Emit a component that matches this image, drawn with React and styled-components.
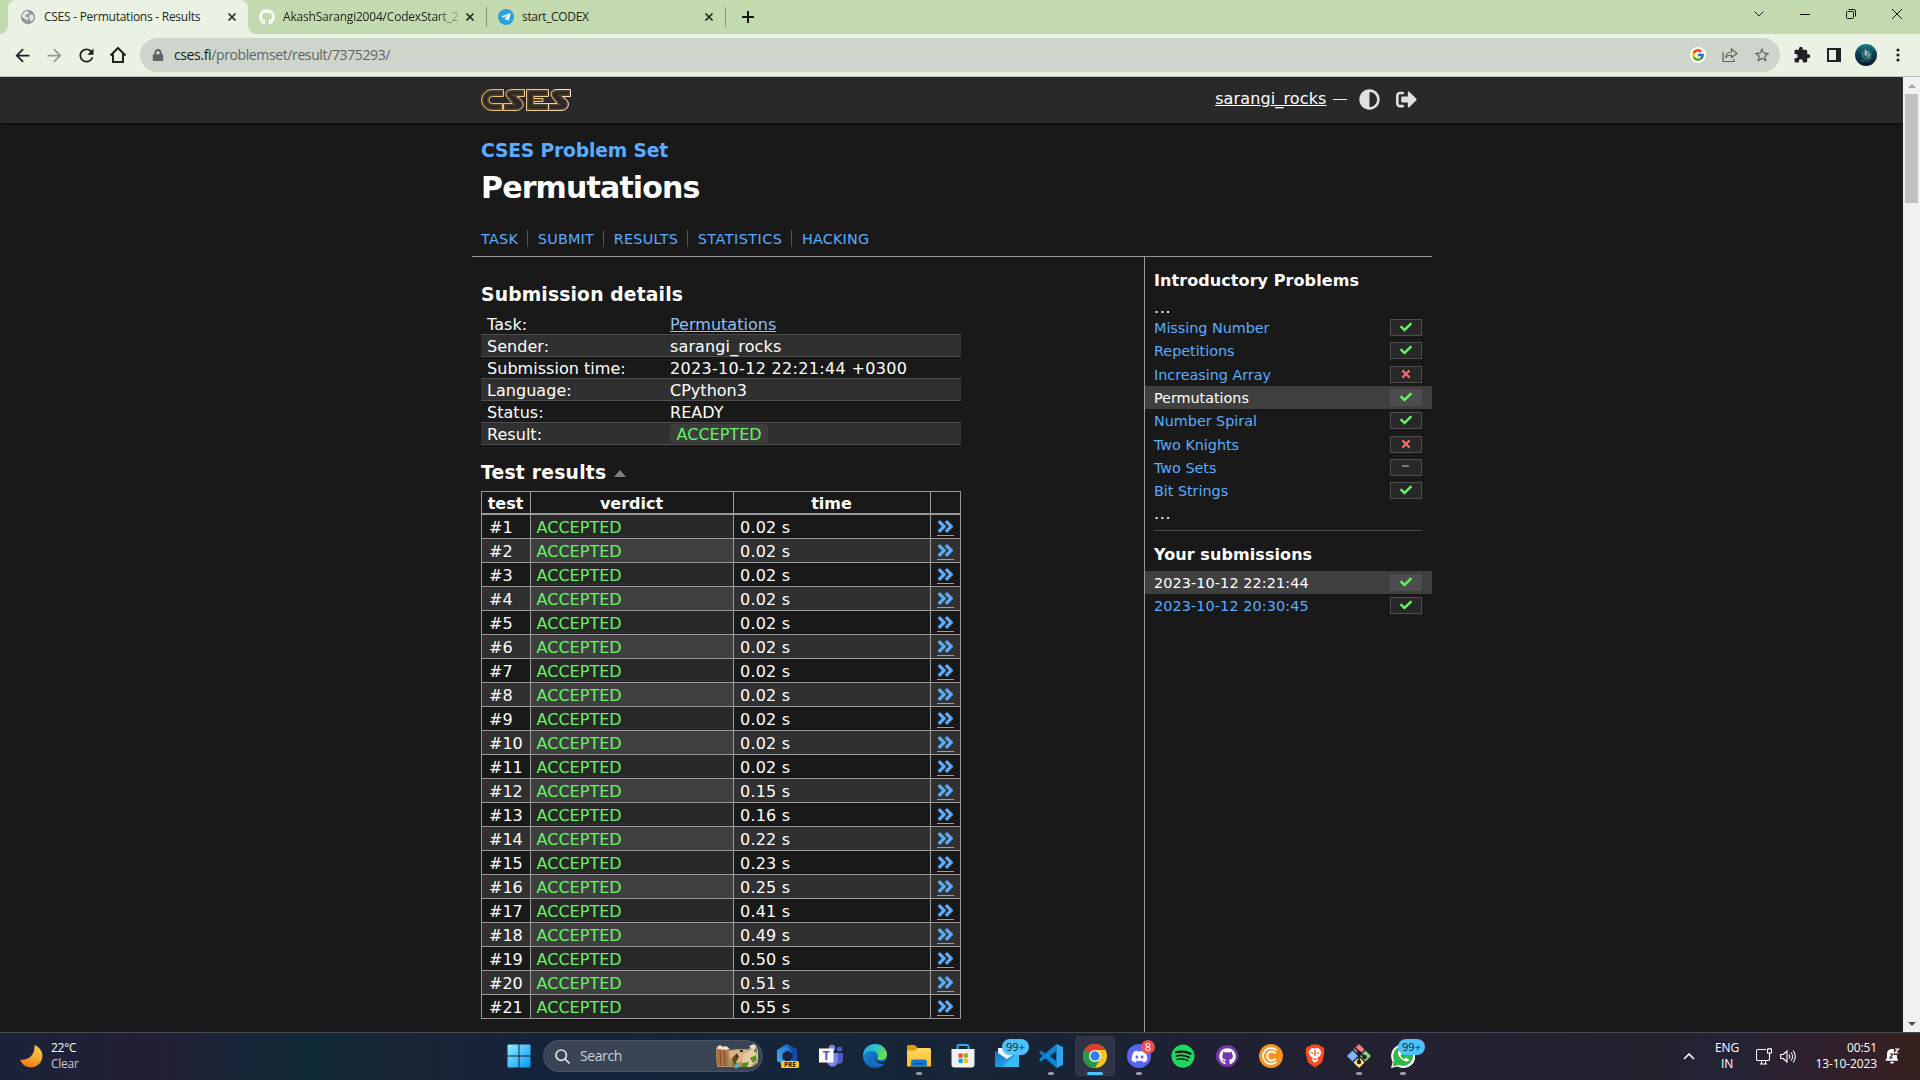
import React from 'react';
import styled, { createGlobalStyle, css } from 'styled-components';
import { FaAdjust, FaSignOutAlt, FaAngleDoubleRight, FaCheck, FaTimes, FaGithub, FaDiscord, FaSpotify, FaTelegramPlane, FaLock } from 'react-icons/fa';
import { FcGoogle } from 'react-icons/fc';
import { MdExtension, MdStarBorder, MdRefresh, MdArrowBack, MdArrowForward } from 'react-icons/md';

const ui = '"Open Sans", "Noto Sans", sans-serif';
const body = '"DejaVu Sans", "Noto Sans", sans-serif';

const Global = createGlobalStyle`
  * { box-sizing: border-box; }
  body { margin: 0; background: #191919; overflow: hidden; }
  svg { display: block; flex: none; }
`;

const Screen = styled.div`
  width: 1920px;
  height: 1080px;
  display: flex;
  flex-direction: column;
  overflow: hidden;
  background: #191919;
`;

/* ---------- browser chrome ---------- */
const TabStrip = styled.div`
  height: 34px;
  flex: none;
  display: flex;
  align-items: stretch;
  background: #c3daaf;
  padding-left: 8px;
  font-family: ${ui};
`;
const Tab = styled.div`
  width: ${p => p.$w}px;
  display: flex;
  align-items: center;
  padding: 0 11px 0 ${p => (p.$active ? 12 : 11)}px;
  color: #202720;
  font-size: 12px;
  line-height: 34px;
  position: relative;
  ${p => p.$active && css`
    background: #eaf3e3;
    border-radius: 8px 8px 0 0;
    &::before, &::after {
      content: '';
      position: absolute;
      bottom: 0;
      width: 8px;
      height: 8px;
    }
    &::before { left: -8px; background: radial-gradient(circle at 0 0, #c3daaf 7.5px, #eaf3e3 8px); }
    &::after { right: -8px; background: radial-gradient(circle at 100% 0, #c3daaf 7.5px, #eaf3e3 8px); }
  `}
`;
const TabTitle = styled.span`
  margin: 0 auto 0 8px;
  white-space: nowrap;
  letter-spacing: ${p => p.$ls || 0}px;
  ${p => p.$fade && css`mask-image: linear-gradient(90deg, #000 88%, rgba(0, 0, 0, 0.25));`}
`;
const TabDivider = styled.div`
  width: 1px;
  height: 20px;
  align-self: center;
  background: #84967a;
`;
const NewTab = styled.div`
  width: 43px;
  display: flex;
  align-items: center;
  justify-content: center;
`;
const WindowButtons = styled.div`
  margin-left: auto;
  display: flex;
  height: 28px;
  div {
    width: 46px;
    display: flex;
    align-items: center;
    justify-content: center;
  }
`;
const Toolbar = styled.div`
  height: 43px;
  flex: none;
  display: flex;
  align-items: center;
  background: #eaf3e3;
  border-bottom: 1px solid #b9c4b4;
  padding-left: 6px;
`;
const ToolButton = styled.div`
  width: 32px;
  height: 32px;
  display: flex;
  align-items: center;
  justify-content: center;
  color: ${p => (p.$dim ? '#969c91' : '#202124')};
`;
const Omnibox = styled.div`
  width: 1640px;
  height: 34px;
  margin: 0 6px;
  border-radius: 17px;
  background: #ced6cb;
  display: flex;
  align-items: center;
  padding: 0 2px 0 12px;
  font: 14px/34px ${ui};
  color: #5f6368;
`;
const Url = styled.span`
  margin-left: 10px;
  margin-right: auto;
  letter-spacing: -0.38px;
  b { font-weight: 400; color: #17191c; }
`;
const GoogleDot = styled.div`
  width: 16px;
  height: 16px;
  border-radius: 50%;
  background: #fff;
  display: flex;
  align-items: center;
  justify-content: center;
`;

/* ---------- page ---------- */
const Viewport = styled.div`
  height: 955px;
  flex: none;
  display: flex;
`;
const Page = styled.div`
  width: 1903px;
  height: 955px;
  overflow: hidden;
  display: flex;
  flex-direction: column;
  align-items: center;
  font: 16px/22px ${body};
  color: #fff;
`;
const SiteHeader = styled.header`
  width: 100%;
  height: 46px;
  flex: none;
  background: #292929;
  box-shadow: 0 1px 3px #080808;
  display: flex;
  justify-content: center;
`;
const HeaderInner = styled.div`
  width: 960px;
  padding: 0 15px 2px 9px;
  display: flex;
  align-items: center;
`;
const LogoLink = styled.a`
  margin-top: 2px;
`;
const UserArea = styled.div`
  margin-left: auto;
  display: flex;
  align-items: center;
  color: #e0e0e0;
`;
const UserLink = styled.a`
  color: #fff;
  text-decoration: underline;
  letter-spacing: 0.13px;
`;
const Dash = styled.span`
  width: 14px;
  height: 1px;
  background: #eee;
  margin: 0 12px 0 6px;
`;
const IconGap = styled.span`
  width: 16px;
`;
const TitleBlock = styled.div`
  width: 960px;
  height: 134px;
  flex: none;
  padding: 15px 9px 0 9.5px;
  border-bottom: 1px solid #999;
`;
const SetTitle = styled.div`
  font-size: 18.72px;
  font-weight: 700;
  line-height: 25px;
  color: #59acff;
  letter-spacing: -0.16px;
`;
const PageTitle = styled.h1`
  margin: 5px 0 0;
  font-size: 30px;
  line-height: 40px;
  letter-spacing: -0.85px;
`;
const Nav = styled.nav`
  display: flex;
  margin-top: 22px;
`;
const NavItem = styled.a`
  height: 17px;
  font-size: 14.4px;
  line-height: 18px;
  color: #59acff;
  padding-right: ${p => 9 - p.$ls}px;
  margin-right: 10px;
  border-right: 1px solid #555;
  letter-spacing: ${p => p.$ls}px;
  &:last-child { border: 0; }
`;
const Columns = styled.div`
  width: 960px;
  flex: 1;
  min-height: 0;
  display: flex;
`;
const Main = styled.main`
  width: 672px;
  padding: 24px 0 0 9px;
`;
const Heading = styled.h3`
  display: flex;
  align-items: center;
  margin: 0;
  height: 26px;
  padding: 2px 0 0 0.5px;
  font-size: 18.72px;
  letter-spacing: ${p => p.$ls}px;
  svg { margin-left: 8px; }
`;
const Details = styled.div`
  width: 480px;
  margin: 6px 0 14px;
`;
const DetailRow = styled.div`
  display: flex;
  height: 22px;
  line-height: 23px;
  padding-left: 6.5px;
  letter-spacing: ${p => p.$ls}px;
  border-bottom: 1px solid #4d4d4d;
  background: ${p => (p.$alt ? '#303030' : 'transparent')};
`;
const DetailLabel = styled.span`
  width: 183px;
  white-space: nowrap;
  letter-spacing: 0.04px;
`;
const TaskLink = styled.a`
  color: #8fc0f0;
  text-decoration: underline;
`;
const ResultTag = styled.span`
  height: 19px;
  margin: 1px 0 0 -0.5px;
  padding: 0 6px 0 7px;
  border-radius: 3px;
  background: #3d3d3d;
  color: #66f266;
  line-height: 21px;
`;
const Results = styled.div`
  width: 480px;
  margin-top: 6px;
  border-left: 1px solid #999;
  border-top: 1px solid #999;
`;
const ResultRow = styled.div`
  display: grid;
  grid-template-columns: 49px 203px 197px 30px;
  height: 24px;
  line-height: 21px;
  background: ${p => (p.$alt ? '#303030' : '#191919')};
`;
const ResultHead = styled(ResultRow)`
  height: 23px;
  line-height: 19px;
  font-weight: 700;
  text-align: center;
`;
const Cell = styled.div`
  border-right: 1px solid #999;
  border-bottom: ${p => (p.$head ? 2 : 1)}px solid #999;
  padding-top: 2px;
  padding-left: ${p => p.$pad || 0}px;
  letter-spacing: ${p => p.$ls || 0}px;
`;
const VerdictCell = styled(Cell)`
  color: #66f266;
  background: ${p => (p.$alt ? '#3f3f3f' : '#282828')};
`;
const MoreLink = styled.a`
  width: 17px;
  height: 19px;
  display: block;
  border-bottom: 1px solid #59acff;
  color: #59acff;
  svg { margin-left: -1px; stroke: #59acff; stroke-width: 12px; }
`;
const Sidebar = styled.aside`
  width: 288px;
  border-left: 1px solid #999;
  padding-top: 12px;
`;
const SideTitle = styled.h4`
  margin: 0 9px 0 9.5px;
  font-size: 16px;
  line-height: 24px;
  letter-spacing: 0.08px;
`;
const Ellipsis = styled.div`
  margin-left: 9.5px;
  height: ${p => p.$h}px;
  line-height: ${p => p.$lh}px;
  letter-spacing: 0.7px;
`;
const SideRow = styled.div`
  height: 23.33px;
  display: flex;
  justify-content: space-between;
  padding: 0 10px 0 9.5px;
  font-size: 14.4px;
  line-height: 25px;
  letter-spacing: ${p => p.$ls}px;
  color: ${p => (p.$current ? '#fff' : '#59acff')};
  background: ${p => (p.$current ? '#3f3f3f' : 'transparent')};
`;
const Score = styled.span`
  width: 32px;
  height: 17px;
  margin-top: 3px;
  display: flex;
  justify-content: center;
  padding-top: 1px;
  border: 1px solid #4d4d4d;
  background: ${p => (p.$current ? '#4d4d4d' : '#282828')};
`;
const ScoreDash = styled.i`
  width: 7px;
  height: 2px;
  margin-top: 4px;
  background: #777;
`;
const Rule = styled.div`
  height: 1px;
  margin: 0 10px 12px 9px;
  background: #4d4d4d;
`;
const SubmissionList = styled.div`
  padding-top: 4px;
`;
const Scrollbar = styled.div`
  width: 17px;
  background: #f1f1f1;
  display: flex;
  flex-direction: column;
  align-items: center;
`;
const ScrollArrow = styled.div`
  height: 17px;
  display: flex;
  align-items: center;
`;
const Thumb = styled.div`
  width: 13px;
  height: 109px;
  margin-bottom: auto;
  background: #c1c1c1;
`;

/* ---------- taskbar ---------- */
const Taskbar = styled.footer`
  height: 48px;
  flex: none;
  display: flex;
  align-items: center;
  border-top: 1px solid #47484e;
  padding-bottom: 1px;
  background: linear-gradient(90deg, #1b2338 0, #221f36 150px, #1b2438 220px, #112a38 315px, #1a2536 400px, #15233a 560px, #162639 800px, #1a2336 1080px, #1e2133 1200px, #242132 1440px, #26202f 1660px, #232336 1715px, #2e2030 1800px, #38201f 1920px);
  font: 12px/16px ${ui};
  color: #fff;
`;
const Weather = styled.div`
  width: 504px;
  padding-left: 19px;
  display: flex;
  align-items: center;
  gap: 8px;
  letter-spacing: -0.25px;
  small { display: block; font-size: 12px; color: #c5c8ce; }
`;
const TaskIcon = styled.div`
  width: ${p => p.$w || 44}px;
  height: 46px;
  flex: none;
  position: relative;
  display: flex;
  align-items: center;
  justify-content: center;
`;
const ActiveTile = styled.div`
  width: 40px;
  height: 40px;
  border-radius: 4px;
  background: #2e3345;
  border: 1px solid #363b4b;
  display: flex;
  align-items: center;
  justify-content: center;
`;
const Running = styled.i`
  position: absolute;
  bottom: 4px;
  left: ${p => (p.$active ? 14 : 19)}px;
  width: ${p => (p.$active ? 16 : 6)}px;
  height: 3px;
  border-radius: 2px;
  background: ${p => (p.$active ? '#4cc2ff' : '#9a9ca4')};
`;
const Badge = styled.span`
  position: absolute;
  top: ${p => (p.$red ? 7 : 6)}px;
  left: ${p => (p.$red ? 24 : 17)}px;
  width: ${p => (p.$red ? 14 : 27)}px;
  height: ${p => (p.$red ? 14 : 16)}px;
  border-radius: 8px;
  background: ${p => (p.$red ? '#e84f55' : '#4cc2ff')};
  color: ${p => (p.$red ? '#fff' : '#10202c')};
  font-size: 11px;
  line-height: ${p => (p.$red ? 14 : 16)}px;
  text-align: center;
`;
const Disc = styled.div`
  width: ${p => p.$d || 24}px;
  height: ${p => p.$d || 24}px;
  border-radius: 50%;
  background: ${p => p.$bg};
  color: ${p => p.$fg || '#fff'};
  display: flex;
  align-items: center;
  justify-content: center;
`;
const SearchBox = styled.div`
  width: 220px;
  height: 32px;
  margin: 0 3px 0 10px;
  padding: 0 3px 0 11px;
  border-radius: 16px;
  background: #394455;
  border: 1px solid #4a5463;
  display: flex;
  align-items: center;
  font-size: 14px;
  color: #cdd2d8;
  letter-spacing: -0.4px;
  span { margin: 0 auto 0 10px; }
`;
const Tray = styled.div`
  margin-left: auto;
  padding-right: 20px;
  display: flex;
  align-items: center;
  letter-spacing: -0.1px;
`;
const Lang = styled.div`
  width: 30px;
  margin: 0 14px 0 17px;
  text-align: center;
`;
const Sound = styled.svg`
  margin-left: 7px;
`;
const Clock = styled.div`
  width: 70px;
  margin: 0 8px 0 10px;
  white-space: nowrap;
  display: flex;
  flex-direction: column;
  align-items: flex-end;
`;

/* ---------- drawings ---------- */
const Close = () => (
  <svg width="10" height="10" viewBox="0 0 10 10" stroke="#202720" strokeWidth="1.7"><path d="M1.5 1.5l7 7M8.5 1.5l-7 7" /></svg>
);
const Globe = () => (
  <svg width="16" height="16" viewBox="0 0 16 16"><circle cx="8" cy="8" r="7.2" fill="#9097a1" /><path d="M2.500 5l3-2.800L9 2.500l-.5 2.300-2.700.9-.8 1.500 2.500.8 1 2-1.200 1.500-2.800-1.800L2 7.800z" fill="#e4ebe0" /><path d="M10 5.500l3 .3.900 2.700-1.200 2.700-2.200 1.600-.4-2.300L8.800 8z" fill="#e4ebe0" /></svg>
);
const Logo = () => {
  const shapes = [
    'M22.5 .5H11A10.5 10.5 0 0 0 11 21.5H21.5V14.5H11.5A3.5 3.5 0 0 1 11.5 7.5H22.5Z',
    'M43.5 .5H31C25 .5 23 5 26.5 8.8L31 14.5H22.5V21.5H35C42 21.5 44.5 15 40 10.6L36 7.5H43.5Z',
    'M45.5 .5H67.5V7.5H53V9.5H62V12.5H53V14.5H67.5V21.5H45.5Z',
    'M89.5 .5H76C70 .5 68.5 5 71.5 8.8L76 14.5H67.5V21.5H80C87 21.5 89.5 15 85.5 10.6L81.5 7.5H89.5Z',
  ];
  return (
    <svg width="91" height="22" viewBox="0 0 91 22" fill="none">
      <defs>
        <linearGradient id="gold" x1="0" y1="0" x2="91" y2="0" gradientUnits="userSpaceOnUse">
          <stop offset="0" stopColor="#e0b86c" /><stop offset=".7" stopColor="#edcf98" /><stop offset="1" stopColor="#fbeedd" />
        </linearGradient>
        {shapes.map((d, i) => <clipPath id={'letter' + i} key={i}><path d={d} /></clipPath>)}
      </defs>
      {shapes.map((d, i) => (
        <g key={i}>
          <path d={d} clipPath={`url(#letter${i})`} stroke="#6b4724" strokeWidth="4" opacity=".75" />
          <path d={d} stroke="url(#gold)" strokeWidth="1" />
        </g>
      ))}
    </svg>
  );
};
const Home = () => (
  <svg width="18" height="18" viewBox="0 0 18 18" fill="none" stroke="#202124" strokeWidth="2"><path d="M1.5 9.5L9 2l7.500 7.500M4 8v8h10V8" /></svg>
);
const Share = () => (
  <svg width="16" height="16" viewBox="0 0 16 16" fill="none" stroke="#5f6368" strokeWidth="1.2"><path d="M1 5v9.500h11V12" /><path d="M3.500 11c.4-4 2.500-6 6-6V2l5.500 4.500-5.500 4V8c-3 0-4.800 1-6 3z" /></svg>
);
const Avatar = () => (
  <svg width="22" height="22" viewBox="0 0 22 22">
    <defs><linearGradient id="av" x2="0" y2="1"><stop stopColor="#19868c" /><stop offset=".4" stopColor="#0e4153" /><stop offset="1" stopColor="#071c2c" /></linearGradient></defs>
    <circle cx="11" cy="11" r="11" fill="url(#av)" />
    <path d="M6 7l4-3 5 1 2 4-1 7-3-2-1 4-3-2-2-4z" fill="#22626f" />
    <path d="M10 5.500l2.500 2-1 5-2-2zM13.500 7l1 4-2 4zM7 8l1 6M15.500 9l-1 6" fill="#b4c8c2" stroke="#5f8c93" strokeWidth=".8" />
    <path d="M5.500 17l2-1 1 2M13 18l2-2" stroke="#1d7a80" fill="none" />
  </svg>
);
const Check = () => <FaCheck size={12} color="#66f266" />;
const Moon = () => (
  <svg width="24" height="24" viewBox="0 0 24 24">
    <defs><linearGradient id="moon" x1=".7" x2=".4" y2="1"><stop stopColor="#f7c64a" /><stop offset=".5" stopColor="#f5ab32" /><stop offset="1" stopColor="#f07818" /></linearGradient></defs>
    <path d="M15.500 1A11.500 11.500 0 1 1 1 15.500C9 17 16.500 11 15.500 1z" fill="url(#moon)" />
  </svg>
);
const WindowsLogo = () => (
  <svg width="24" height="24" viewBox="0 0 24 24">
    <defs><linearGradient id="win" x2="1" y2="1"><stop stopColor="#8bf0ff" /><stop offset="1" stopColor="#0a96f5" /></linearGradient></defs>
    <path d="M1.500 .5h10v11h-11v-10a1 1 0 0 1 1-1zM12.500 .5h10a1 1 0 0 1 1 1v10h-11zM.5 12.500h11v11h-10a1 1 0 0 1-1-1zM12.500 12.500h11v10a1 1 0 0 1-1 1h-10z" fill="url(#win)" />
  </svg>
);
const Canyon = () => (
  <svg width="44" height="24" viewBox="0 0 44 24">
    <path d="M1 4l4-2 7 1 2 3 9-1 8 1 7-4 5 3v14l-6 4H2L1 12z" fill="#b98d5e" />
    <path d="M1 5h11l2 17H2z" fill="#a77749" /><path d="M5 6l1 16M9 6l1 16" stroke="#87582f" strokeWidth="1.500" />
    <path d="M14 7l16-2 5 3-5 8-7 3-8-5z" fill="#d8b383" /><path d="M29 10l9-6 5 3v9l-8 7h-9z" fill="#e4cda1" />
    <path d="M22 9l2 4-3 5 2 5h-4l-2-9z" fill="#6b442a" /><path d="M20 20l4-1-1 5h-4z" fill="#43b9d4" />
    <path d="M16 18l4 1-2 3zM27 19l7-1-2 5h-6zM35 14l6-3 1 5-4 3zM38 6l4-1v5z" fill="#5c8f2c" />
    <path d="M2 3l3-2 3 2 3-1 4 3-4 1-8-1zM34 2l5-2 3 3-4 3z" fill="#e8ddd0" /><path d="M25 6h3v2h-3zM21 11h2v2h-2z" fill="#2d2a2a" />
  </svg>
);
const M365 = () => (
  <svg width="24" height="24" viewBox="0 0 24 24">
    <defs><linearGradient id="m1" x1="1" x2="0" y2="1"><stop stopColor="#1b59c4" /><stop offset="1" stopColor="#45b8f4" /></linearGradient></defs>
    <path d="M11 0l10 5.500v12L12 23 1 17V6z" fill="url(#m1)" /><path d="M11 0l10 5.500v12l-5 2.500V9z" fill="#154cae" />
    <path d="M11.500 6.500l5 3v5.500l-5 3-5-3V9.500z" fill="#16243a" />
    <rect x="5" y="17" width="18" height="7" rx="1.500" fill="#ffca1d" /><text x="14" y="23" fontSize="6.500" fontWeight="700" fontFamily="Open Sans, sans-serif" textAnchor="middle" fill="#1a1a1a">PRE</text>
  </svg>
);
const Teams = () => (
  <svg width="24" height="24" viewBox="0 0 24 24">
    <circle cx="20.500" cy="5" r="2.600" fill="#5059c9" /><circle cx="13" cy="4" r="3.300" fill="#7b83eb" />
    <path d="M17 9h7v6.500c0 3-2 4.500-4.500 4.500z" fill="#5059c9" /><path d="M8 9h11v7.500c0 4-2.500 6-5.500 6S8 20 8 17z" fill="#7b83eb" />
    <rect y="4.500" width="14.500" height="14" fill="#fff" /><text x="7.200" y="16" fontSize="12" fontWeight="700" fontFamily="Open Sans, sans-serif" textAnchor="middle" fill="#4b53bc">T</text>
  </svg>
);
const Edge = () => (
  <svg width="24" height="24" viewBox="0 0 24 24">
    <defs>
      <linearGradient id="e1" x2="1" y2=".4"><stop stopColor="#2aa6ea" /><stop offset=".55" stopColor="#2cc4c4" /><stop offset="1" stopColor="#6ade50" /></linearGradient>
      <linearGradient id="e2" x2="1" y2="1"><stop stopColor="#1a8fe0" /><stop offset="1" stopColor="#0c4f9e" /></linearGradient>
    </defs>
    <circle cx="12" cy="12" r="12" fill="url(#e2)" />
    <path d="M.3 10C1.500 3.500 6.500 0 12 0c7 0 12 5 12 10.500 0 3.500-2.500 5.700-5.800 5.700-3 0-4.400-1.200-3.700-2.300C16.500 11 13.500 7 9 7 5 7 1.500 8.500.3 12z" fill="url(#e1)" />
    <path d="M9 10c-3 4-1 11 5 12.500 3 .6 6-.6 8.300-3.500-6 3-12.500-1-10.300-6.500z" fill="#1a6cc0" />
    <path d="M13 12c-1.500 4 3.500 6.500 8.500 5.200l2 .3-1 2C16 21.500 11 17 13 12z" fill="#17243a" opacity=".8" />
  </svg>
);
const Explorer = () => (
  <svg width="24" height="22" viewBox="0 0 24 22">
    <defs><linearGradient id="fo" x2="0" y2="1"><stop stopColor="#ffda62" /><stop offset="1" stopColor="#fcb928" /></linearGradient></defs>
    <path d="M0 1.500A1.500 1.500 0 0 1 1.500 0H8l2.500 3H22v6H0z" fill="#e09b0c" /><path d="M0 5.500h8L10.500 3H22.500A1.500 1.500 0 0 1 24 4.500V21.500H0z" fill="url(#fo)" />
    <path d="M4 21.500V17a2.500 2.500 0 0 1 2.500-2.500h11A2.500 2.500 0 0 1 20 17v4.500z" fill="#0f78d0" /><path d="M7.500 18.500h9" stroke="#064f96" strokeWidth="1.500" />
  </svg>
);
const Store = () => (
  <svg width="24" height="24" viewBox="0 0 24 24">
    <path d="M6.500 6V2.500A1.500 1.500 0 0 1 8 1h8a1.500 1.500 0 0 1 1.500 1.500V6" fill="none" stroke="#26aee8" strokeWidth="2" />
    <path d="M.5 5h23v15.500a3 3 0 0 1-3 3h-17a3 3 0 0 1-3-3z" fill="#f1f1f1" />
    <path d="M7.500 9.500h4.200v4.200H7.500z" fill="#f25022" /><path d="M12.700 9.500h4.200v4.200h-4.200z" fill="#7fba00" /><path d="M7.500 14.700h4.200v4.200H7.500z" fill="#00a4ef" /><path d="M12.700 14.700h4.200v4.200h-4.200z" fill="#ffb900" />
  </svg>
);
const Mail = () => (
  <svg width="24" height="22" viewBox="0 0 24 22">
    <defs><linearGradient id="ml" x2="1" y2="1"><stop stopColor="#1473c8" /><stop offset="1" stopColor="#2cb5f4" /></linearGradient></defs>
    <path d="M0 7L12 0l12 7-12 9z" fill="#0b4d92" /><path d="M3 3h18v8l-9 5-9-6z" fill="#f2f5f8" />
    <path d="M0 6l12 8 12-8v16H0z" fill="url(#ml)" /><path d="M24 6L7 22h17z" fill="#41c5f5" opacity=".7" />
  </svg>
);
const VSCode = () => (
  <svg width="24" height="24" viewBox="0 0 24 24">
    <path d="M17.500 0L6.800 10 2.200 6.500.5 7.300v1.900L17.500 24z" fill="#1177bd" opacity=".95" /><path d="M17.500 24L6.800 14 2.200 17.500.5 16.700v-1.900L17.500 0z" fill="#0d86d0" />
    <path d="M17.500 7v10L11 12z" fill="#18263a" /><path d="M17.500 0L24 3v18l-6.500 3z" fill="#2ba5f0" />
  </svg>
);
const Chrome = () => (
  <svg width="24" height="24" viewBox="0 0 24 24">
    <circle cx="12" cy="12" r="12" fill="#f9c620" />
    <path d="M12 12L1.600 6A12 12 0 0 0 12 24l5.200-9z" fill="#249a49" />
    <path d="M12 12L6.800 15 1.600 6A12 12 0 0 1 22.400 6H12z" fill="#e33b2e" />
    <path d="M1.600 6L6.800 15 9 9z" fill="#249a49" />
    <circle cx="12" cy="12" r="6" fill="#fff" /><circle cx="12" cy="12" r="4.700" fill="#2f7de9" />
  </svg>
);
const Coin = () => (
  <svg width="24" height="24" viewBox="0 0 24 24" fill="none" stroke="#fff"><circle cx="12" cy="12" r="12" fill="#f7931e" stroke="none" /><path d="M17.500 6.200a8 8 0 1 0 0 11.600" strokeWidth="1.800" /><path d="M16.500 9.300a4.600 4.600 0 1 0 0 5.400" strokeWidth="2" /></svg>
);
const Brave = () => (
  <svg width="20" height="24" viewBox="0 0 20 24">
    <path d="M6.500 .5h7l2 2 2-.2L19.500 5l-.7 2 .7 1.500-2.500 10L10 23.500 3 18.500.5 8.500 1.200 7 .5 5l2-2.700 2 .2z" fill="#fb4b20" />
    <path d="M10 4.500l3.500-.5 3 4-1.500 4-3 2 1.500 2-3.500 2.800L6.500 16 8 14l-3-2-1.500-4 3-4z" fill="#fff" />
    <path d="M5 7.800l3.300 1-.8 1.400zM15 7.800l-3.300 1 .8 1.400zM9.400 6h1.200l.2 5-.8 1-.8-1zM7.800 15.600l2.200-1.300 2.200 1.300-2.200.7z" fill="#fb4b20" />
  </svg>
);
const GitTool = () => (
  <svg width="24" height="24" viewBox="0 0 24 24">
    <path d="M12 0l5.500 5.500L12 11 6.500 5.500z" fill="#f08080" /><path d="M5.500 6.500L11 12l-5.500 5.500L0 12z" fill="#80b3ff" /><path d="M18.500 6.500L24 12l-5.500 5.500L13 12z" fill="#8fd16a" /><path d="M12 13l5.500 5.500L12 24l-5.500-5.500z" fill="#ffe680" />
    <path d="M8.500 4L12 8v10M12 8l5.500 5" stroke="#1c1c24" strokeWidth="1.700" fill="none" /><circle cx="12" cy="8.500" r="2" fill="#1c1c24" /><circle cx="12" cy="18" r="2.200" fill="#1c1c24" /><circle cx="17.500" cy="13" r="2.200" fill="#1c1c24" />
  </svg>
);
const WhatsApp = () => (
  <svg width="24" height="24" viewBox="0 0 24 24"><path d="M12 0a12 12 0 1 1-5.600 22.400L0 24l1.700-6A12 12 0 0 1 12 0z" fill="#fff" /><circle cx="12" cy="12" r="10" fill="#2fb846" /><path d="M3 16l-1.200 6.200L8 21z" fill="#2fb846" /><path d="M8 6.500c-2 1.500-1 5 2 8s6.500 4 8 2l-.3-1.500-3-1.300-1.400 1.600c-1.800-.8-3-2-3.800-3.800L10.700 10 9.500 6.800z" fill="#fff" /></svg>
);

const Detail = ({ label, alt, ls = 0.02, children }) => (
  <DetailRow $alt={alt} $ls={ls}><DetailLabel>{label}</DetailLabel>{children}</DetailRow>
);
const navItems = [['TASK', 0.25], ['SUBMIT', 0.2], ['RESULTS', 0.2], ['STATISTICS', 0.47], ['HACKING', 0.2]];
const problems = [
  ['Missing Number', 'ok'], ['Repetitions', 'ok'], ['Increasing Array', 'no'], ['Permutations', 'ok', true],
  ['Number Spiral', 'ok'], ['Two Knights', 'no'], ['Two Sets', 'none'], ['Bit Strings', 'ok'],
];
const submissions = [['2023-10-12 22:21:44', 'ok', true], ['2023-10-12 20:30:45', 'ok']];
const times = ['0.02', '0.02', '0.02', '0.02', '0.02', '0.02', '0.02', '0.02', '0.02', '0.02', '0.02', '0.15', '0.16', '0.22', '0.23', '0.25', '0.41', '0.49', '0.50', '0.51', '0.55'];

const SideItem = ({ item: [name, state, current], ls = -0.04 }) => (
  <SideRow $current={current} $ls={ls}>
    <span>{name}</span>
    <Score $current={current}>
      {state === 'ok' && <Check />}
      {state === 'no' && <FaTimes size={12} color="#f26b6b" />}
      {state === 'none' && <ScoreDash />}
    </Score>
  </SideRow>
);

export default function App() {
  return (
    <Screen>
      <Global />
      <TabStrip>
        <Tab $active $w={240}><Globe /><TabTitle $ls={-0.26}>CSES - Permutations - Results</TabTitle><Close /></Tab>
        <Tab $w={238}><FaGithub size={16} color="#fff" /><TabTitle $fade $ls={-0.2}>AkashSarangi2004/CodexStart_2</TabTitle><Close /></Tab>
        <TabDivider />
        <Tab $w={238}><Disc $d={16} $bg="#2ba2de"><FaTelegramPlane size={10} /></Disc><TabTitle $ls={-0.34}>start_CODEX</TabTitle><Close /></Tab>
        <TabDivider />
        <NewTab><svg width="12" height="12" viewBox="0 0 12 12" stroke="#111" strokeWidth="2"><path d="M6 0v12M0 6h12" /></svg></NewTab>
        <WindowButtons>
          <div><svg width="10" height="6" viewBox="0 0 10 6" fill="none" stroke="#222"><path d="M.5 .5L5 5 9.500 .5" /></svg></div>
          <div><svg width="10" height="1"><rect width="10" height="1" fill="#111" /></svg></div>
          <div><svg width="10" height="10" viewBox="0 0 10 10" fill="none" stroke="#111"><rect x=".5" y="2.500" width="7" height="7" rx="1" /><path d="M2.500 .5H8a1.500 1.500 0 0 1 1.500 1.500v5.500" /></svg></div>
          <div><svg width="10" height="10" viewBox="0 0 10 10" stroke="#111"><path d="M0 0l10 10M10 0L0 10" /></svg></div>
        </WindowButtons>
      </TabStrip>
      <Toolbar>
        <ToolButton><MdArrowBack size={21} /></ToolButton>
        <ToolButton $dim><MdArrowForward size={21} /></ToolButton>
        <ToolButton><MdRefresh size={21} /></ToolButton>
        <ToolButton><Home /></ToolButton>
        <Omnibox>
          <FaLock size={12} />
          <Url><b>cses.fi</b>/problemset/result/7375293/</Url>
          <ToolButton><GoogleDot><FcGoogle size={14} /></GoogleDot></ToolButton>
          <ToolButton><Share /></ToolButton>
          <ToolButton><MdStarBorder size={18} color="#5f6368" /></ToolButton>
        </Omnibox>
        <ToolButton><MdExtension size={18} /></ToolButton>
        <ToolButton><svg width="14" height="14" viewBox="0 0 14 14"><path d="M0 0h14v14H0zM2 2v10h7V2z" fillRule="evenodd" fill="#202124" /></svg></ToolButton>
        <ToolButton><Avatar /></ToolButton>
        <ToolButton><svg width="4" height="14" fill="#202124"><circle cx="2" cy="2" r="1.600" /><circle cx="2" cy="7" r="1.600" /><circle cx="2" cy="12" r="1.600" /></svg></ToolButton>
      </Toolbar>

      <Viewport>
        <Page>
          <SiteHeader>
            <HeaderInner>
              <LogoLink><Logo /></LogoLink>
              <UserArea>
                <UserLink>sarangi_rocks</UserLink>
                <Dash />
                <FaAdjust size={21} />
                <IconGap />
                <FaSignOutAlt size={21} />
              </UserArea>
            </HeaderInner>
          </SiteHeader>
          <TitleBlock>
            <SetTitle>CSES Problem Set</SetTitle>
            <PageTitle>Permutations</PageTitle>
            <Nav>
              {navItems.map(([t, ls]) => <NavItem key={t} $ls={ls}>{t}</NavItem>)}
            </Nav>
          </TitleBlock>
          <Columns>
            <Main>
              <Heading $ls={0.17}>Submission details</Heading>
              <Details>
                <Detail label="Task:"><TaskLink>Permutations</TaskLink></Detail>
                <Detail label="Sender:" alt ls={0.13}>sarangi_rocks</Detail>
                <Detail label="Submission time:" ls={0.32}>2023-10-12 22:21:44 +0300</Detail>
                <Detail label="Language:" alt>CPython3</Detail>
                <Detail label="Status:">READY</Detail>
                <Detail label="Result:" alt><ResultTag>ACCEPTED</ResultTag></Detail>
              </Details>
              <Heading $ls={0.25}>Test results<svg width="12" height="7" viewBox="0 0 12 7"><path d="M0 7L6 0l6 7z" fill="#808080" /></svg></Heading>
              <Results>
                <ResultHead><Cell $head>test</Cell><Cell $head>verdict</Cell><Cell $head>time</Cell><Cell $head /></ResultHead>
                {times.map((t, i) => (
                  <ResultRow key={i} $alt={i % 2 === 1}>
                    <Cell $pad={7.5}>#{i + 1}</Cell>
                    <VerdictCell $pad={6} $alt={i % 2 === 1} $ls={0.03}>ACCEPTED</VerdictCell>
                    <Cell $pad={6.5} $ls={0.2}>{t} s</Cell>
                    <Cell $pad={6}><MoreLink><FaAngleDoubleRight size={19} /></MoreLink></Cell>
                  </ResultRow>
                ))}
              </Results>
            </Main>
            <Sidebar>
              <SideTitle>Introductory Problems</SideTitle>
              <Ellipsis $h={23} $lh={29}>...</Ellipsis>
              {problems.map(p => <SideItem key={p[0]} item={p} />)}
              <Ellipsis $h={27} $lh={22}>...</Ellipsis>
              <Rule />
              <SideTitle>Your submissions</SideTitle>
              <SubmissionList>
                {submissions.map(p => <SideItem key={p[0]} item={p} ls={0.1} />)}
              </SubmissionList>
            </Sidebar>
          </Columns>
        </Page>
        <Scrollbar>
          <ScrollArrow><svg width="8" height="4"><path d="M0 4l4-4 4 4z" fill="#a3a3a3" /></svg></ScrollArrow>
          <Thumb />
          <ScrollArrow><svg width="8" height="4"><path d="M0 0l4 4 4-4z" fill="#505050" /></svg></ScrollArrow>
        </Scrollbar>
      </Viewport>

      <Taskbar>
        <Weather><Moon /><div>22°C<small>Clear</small></div></Weather>
        <TaskIcon $w={29}><WindowsLogo /></TaskIcon>
        <SearchBox>
          <svg width="15" height="15" viewBox="0 0 15 15" fill="none" stroke="#dfe2e6" strokeWidth="1.700"><circle cx="6.200" cy="6.200" r="5.200" /><path d="M10 10l4.500 4.500" /></svg>
          <span>Search</span>
          <Canyon />
        </SearchBox>
        <TaskIcon $w={43}><M365 /></TaskIcon>
        <TaskIcon><Teams /></TaskIcon>
        <TaskIcon><Edge /></TaskIcon>
        <TaskIcon><Explorer /><Running /></TaskIcon>
        <TaskIcon><Store /></TaskIcon>
        <TaskIcon><Mail /><Badge>99+</Badge></TaskIcon>
        <TaskIcon><VSCode /><Running /></TaskIcon>
        <TaskIcon><ActiveTile><Chrome /></ActiveTile><Running $active /></TaskIcon>
        <TaskIcon><Disc $bg="#5865f2"><FaDiscord size={17} /></Disc><Badge $red>8</Badge><Running /></TaskIcon>
        <TaskIcon><Disc $bg="#111"><FaSpotify size={24} color="#1ed760" /></Disc></TaskIcon>
        <TaskIcon><Disc $d={22} $bg="#7a35a8"><FaGithub size={17} /></Disc></TaskIcon>
        <TaskIcon><Coin /></TaskIcon>
        <TaskIcon><Brave /></TaskIcon>
        <TaskIcon><GitTool /><Running /></TaskIcon>
        <TaskIcon><WhatsApp /><Badge>99+</Badge><Running /></TaskIcon>
        <Tray>
          <svg width="12" height="7" viewBox="0 0 12 7" fill="none" stroke="#fff" strokeWidth="1.600"><path d="M1 6l5-5 5 5" /></svg>
          <Lang>ENG<br />IN</Lang>
          <svg width="17" height="17" viewBox="0 0 17 17" fill="none" stroke="#fff" strokeWidth="1.100"><path d="M10 1.500H2A1.500 1.500 0 0 0 .5 3v8A1.500 1.500 0 0 0 2 12.500h10a1.500 1.500 0 0 0 1.500-1.500V7M4 16h7M5.500 12.500V16M9.500 12.500V16" /><path d="M11.500 1h4v4h-4zM13.500 5v3M12.500 0v1M14.500 0v1" /></svg>
          <Sound width="17" height="15" viewBox="0 0 17 15" fill="none" stroke="#fff" strokeWidth="1.100"><path d="M.7 5.500h2.500L7 2v11L3.200 9.500H.7z" /><path d="M9 5.500a3 3 0 0 1 0 4M11 3.500a6 6 0 0 1 0 8M13 1.500a9 9 0 0 1 0 12" /></Sound>
          <Clock><span>00:51</span><span>13-10-2023</span></Clock>
          <svg width="15" height="16" viewBox="0 0 15 16"><path d="M7 1C3.500 1 2 3.500 2 6v4L.5 12v.8h12.500V12L12 10V7H9V1.200zM5 13.800h4a2 2 0 0 1-4 0z" fill="#fff" /><path d="M5 6h3l-3 4h3" stroke="#2e2030" strokeWidth="1.200" fill="none" /><path d="M10 1h3.500L10 5h3.500" stroke="#fff" strokeWidth="1.200" fill="none" /></svg>
        </Tray>
      </Taskbar>
    </Screen>
  );
}
